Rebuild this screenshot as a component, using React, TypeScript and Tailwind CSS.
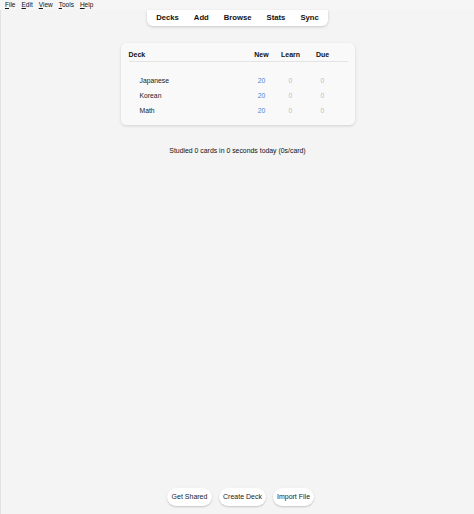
import React from "react";

const decks = ["Japanese", "Korean", "Math"];

function Mn({ t }: { t: string }) {
  return (
    <span>
      <span className="underline underline-offset-[1px]">{t[0]}</span>
      {t.slice(1)}
    </span>
  );
}

export default function App() {
  return (
    <div className="w-[474px] h-[514px] bg-[#f4f4f4] flex flex-col font-['Liberation_Sans',Arial,sans-serif] text-[#222] overflow-hidden">
      <div className="h-[10px] flex items-center text-[6.5px] leading-none text-[#111] pl-[5px] gap-[6px] bg-[#f6f6f6]">
        <Mn t="File" />
        <Mn t="Edit" />
        <Mn t="View" />
        <Mn t="Tools" />
        <Mn t="Help" />
      </div>
      <div className="flex-1 flex flex-col items-center border-l border-[#e2e2e2]">
        <div className="h-[16px] bg-white rounded-b-[6px] shadow-[0_1px_3px_rgba(0,0,0,0.18)] flex items-center px-[9px] gap-[15px] text-[7.7px] font-bold text-[#111]">
          <span>Decks</span>
          <span>Add</span>
          <span>Browse</span>
          <span>Stats</span>
          <span>Sync</span>
        </div>
        <div className="mt-[17px] w-[234px] bg-[#f9f9f9] rounded-[5px] shadow-[0_1px_3px_rgba(0,0,0,0.15)] pl-[8px] pr-[7px] pt-[6px] pb-[6px] text-[6.8px]">
          <div className="h-[13px] grid grid-cols-[1fr_28px_30px_34px_8px] items-center font-bold text-[7px] text-[#111] border-b border-[#e4e4e4]">
            <span>Deck</span>
            <span className="text-center">New</span>
            <span className="text-center">Learn</span>
            <span className="text-center">Due</span>
            <span />
          </div>
          <div className="mt-[12px]">
            {decks.map((d) => (
              <div key={d} className="h-[15px] grid grid-cols-[1fr_28px_30px_34px_8px] items-center">
                <span className="pl-[11px] text-[#222]">{d}</span>
                <span className="text-center text-[#4a86d8]">20</span>
                <span className="text-center text-[#bdbdbd]">0</span>
                <span className="text-center text-[#bdbdbd]">0</span>
                <span />
              </div>
            ))}
          </div>
        </div>
        <div className="mt-[21px] h-[10px] leading-[10px] text-[6.9px] text-[#111]">
          Studied 0 cards in 0 seconds today (0s/card)
        </div>
        <div className="flex-1" />
        <div className="flex gap-[7px] mb-[8px] ml-[6px] text-[7px] text-[#222]">
          <div className="h-[18px] w-[45px] flex items-center justify-center bg-white rounded-full shadow-[0_1px_2px_rgba(0,0,0,0.2)]">Get Shared</div>
          <div className="h-[18px] w-[47px] flex items-center justify-center bg-white rounded-full shadow-[0_1px_2px_rgba(0,0,0,0.2)]">Create Deck</div>
          <div className="h-[18px] w-[41px] flex items-center justify-center bg-white rounded-full shadow-[0_1px_2px_rgba(0,0,0,0.2)]">Import File</div>
        </div>
      </div>
    </div>
  );
}
